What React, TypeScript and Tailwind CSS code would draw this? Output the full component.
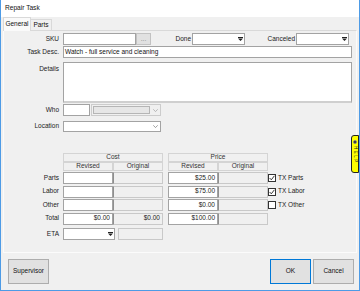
import React from "react";

function Tri() {
  return (
    <svg width="5" height="4" viewBox="0 0 5 4">
      <rect x="0" y="0" width="5" height="1" fill="#222" />
      <polygon points="0,1.5 5,1.5 2.5,4" fill="#222" />
    </svg>
  );
}

function Chev({ color = "#888" }: { color?: string }) {
  return (
    <svg width="5" height="3" viewBox="0 0 5 3">
      <polyline points="0.3,0.3 2.5,2.6 4.7,0.3" fill="none" stroke={color} strokeWidth="0.8" />
    </svg>
  );
}

function Check({ checked }: { checked: boolean }) {
  return (
    <div className="w-[8px] h-[8px] border border-[#333] bg-white flex items-center justify-center">
      {checked && (
        <svg width="6" height="6" viewBox="0 0 6 6">
          <polyline points="0.6,3 2.3,4.8 5.4,0.8" fill="none" stroke="#222" strokeWidth="0.9" />
        </svg>
      )}
    </div>
  );
}

function Label({ children, className = "" }: { children?: React.ReactNode; className?: string }) {
  return <div className={`w-[55px] shrink-0 text-right text-[#222] ${className}`}>{children}</div>;
}

function White({ w, children, className = "" }: { w: string; children?: React.ReactNode; className?: string }) {
  return (
    <div className={`${w} h-full bg-white border border-[#a3a3a3] flex items-center justify-end pr-[2px] shrink-0 ${className}`}>
      {children}
    </div>
  );
}

function Grey({ w, children, className = "" }: { w: string; children?: React.ReactNode; className?: string }) {
  return (
    <div className={`${w} h-full bg-[#f0f0f0] border border-[#c9c9c9] border-l-[#8f8f8f] flex items-center justify-end pr-[2px] shrink-0 ${className}`}>
      {children}
    </div>
  );
}

function Head({ w, children }: { w: string; children?: React.ReactNode }) {
  return (
    <div className={`${w} h-full bg-[#f0f0f0] border border-[#d4d4d4] flex items-center justify-center text-[#333] shrink-0`}>
      {children}
    </div>
  );
}

function Row({
  label,
  cr,
  co,
  pr,
  po,
  tx,
  checked,
  className = "",
}: {
  label: string;
  cr?: string;
  co?: string;
  pr?: string;
  po?: string;
  tx?: string;
  checked?: boolean;
  className?: string;
}) {
  return (
    <div className={`flex items-center h-[12px] ${className}`}>
      <Label>{label}</Label>
      <div className="w-[4px] shrink-0" />
      <White w="w-[50px]">{cr}</White>
      <Grey w="w-[50px]">{co}</Grey>
      <div className="w-[5px] shrink-0" />
      <White w="w-[50px]">{pr}</White>
      <Grey w="w-[50px]">{po}</Grey>
      {tx && (
        <div className="flex items-center ml-[0px] gap-[2px]">
          <Check checked={!!checked} />
          <span className="text-[#222]">{tx}</span>
        </div>
      )}
    </div>
  );
}

export default function App() {
  return (
    <div className="relative w-[360px] h-[291px] overflow-hidden bg-[#f0f0f0] border-x border-b border-[#4d9be6] font-['Liberation_Sans',Arial,sans-serif] text-[6.5px] leading-none text-[#1a1a1a]">
      {/* title bar */}
      <div className="h-[17px] bg-white flex items-center pl-[4px] text-[6.6px] text-[#111]">Repair Task</div>

      {/* tabs */}
      <div className="flex items-end h-[13px] pl-[2px]">
        <div className="relative z-10 -mb-px h-[14px] w-[28px] bg-[#fafafa] border border-b-0 border-[#d9d9d9] flex items-center justify-center text-[#111]">
          General
        </div>
        <div className="h-[11px] w-[21px] bg-[#f0f0f0] border border-b-0 border-l-0 border-[#d9d9d9] flex items-center justify-center text-[#111]">
          Parts
        </div>
      </div>

      {/* panel */}
      <div className="ml-[2px] w-[354px] h-[223px] border border-[#d9d9d9] border-b-[#fbfbfb] border-l-[#fbfbfb] border-r-[#fbfbfb] flex flex-col">
        {/* SKU row */}
        <div className="mt-[2px] flex items-center h-[12px]">
          <Label>SKU</Label>
          <div className="w-[4px] shrink-0" />
          <div className="w-[73px] h-full bg-white border border-[#a3a3a3] shrink-0" />
          <div className="w-[15px] h-full bg-[#e1e1e1] border border-[#c2c2c2] flex items-center justify-center text-[#888] shrink-0">
            ...
          </div>
          <div className="w-[41px] text-right pr-[1px] shrink-0">Done</div>
          <div className="w-[53px] h-full bg-white border border-[#a3a3a3] flex items-center justify-end pr-[1px] shrink-0">
            <Tri />
          </div>
          <div className="w-[51px] text-right pr-[1px] shrink-0">Canceled</div>
          <div className="w-[53px] h-full bg-white border border-[#a3a3a3] flex items-center justify-end pr-[1px] shrink-0">
            <Tri />
          </div>
        </div>

        {/* Task desc */}
        <div className="mt-[1px] flex items-center h-[12px]">
          <Label>Task Desc.</Label>
          <div className="w-[4px] shrink-0" />
          <div className="w-[289px] h-full bg-white border border-[#a3a3a3] flex items-center pl-[1px] text-[#111] shrink-0">
            Watch - full service and cleaning
          </div>
        </div>

        {/* Details */}
        <div className="mt-[4px] flex h-[41px]">
          <Label className="pt-[4px]">Details</Label>
          <div className="w-[4px] shrink-0" />
          <div className="w-[289px] h-full bg-white border border-[#a3a3a3] border-b-2 border-b-[#cfcfcf] shrink-0" />
        </div>

        {/* Who */}
        <div className="mt-[1px] flex items-center h-[12px]">
          <Label>Who</Label>
          <div className="w-[4px] shrink-0" />
          <div className="w-[27px] h-full bg-white border border-[#a3a3a3] shrink-0" />
          <div className="ml-[1px] w-[70px] h-full bg-[#f0f0f0] border border-[#cccccc] flex items-center pl-[1px] pr-[2px] shrink-0">
            <div className="w-[57px] h-[8px] bg-[#e6e6e6] border border-[#b5b5b5]" />
            <div className="flex-1 flex justify-end">
              <Chev color="#aaa" />
            </div>
          </div>
        </div>

        {/* Location */}
        <div className="mt-[5px] flex items-center h-[11px]">
          <Label>Location</Label>
          <div className="w-[4px] shrink-0" />
          <div className="w-[98px] h-full bg-white border border-[#a3a3a3] flex items-center justify-end pr-[2px] shrink-0">
            <Chev color="#8a8a8a" />
          </div>
        </div>

        {/* header rows */}
        <div className="mt-[21px] flex items-center h-[9px]">
          <Label />
          <div className="w-[4px] shrink-0" />
          <Head w="w-[100px]">Cost</Head>
          <div className="w-[5px] shrink-0" />
          <Head w="w-[100px]">Price</Head>
        </div>
        <div className="flex items-center h-[9px]">
          <Label />
          <div className="w-[4px] shrink-0" />
          <Head w="w-[50px]">Revised</Head>
          <Head w="w-[50px]">Original</Head>
          <div className="w-[5px] shrink-0" />
          <Head w="w-[50px]">Revised</Head>
          <Head w="w-[50px]">Original</Head>
        </div>

        <Row className="mt-[1px]" label="Parts" pr="$25.00" tx="TX Parts" checked />
        <Row className="mt-[1.5px]" label="Labor" pr="$75.00" tx="TX Labor" checked />
        <Row className="mt-[1.5px]" label="Other" pr="$0.00" tx="TX Other" checked={false} />
        <Row className="mt-[1.5px]" label="Total" cr="$0.00" co="$0.00" pr="$100.00" />

        {/* ETA */}
        <div className="mt-[3.5px] flex items-center h-[12px]">
          <Label>ETA</Label>
          <div className="w-[4px] shrink-0" />
          <div className="w-[52px] h-full bg-white border border-[#a3a3a3] flex items-center justify-end pr-[1px] shrink-0">
            <Tri />
          </div>
          <div className="ml-[3px] w-[45px] h-full bg-[#f0f0f0] border border-[#c9c9c9] shrink-0" />
        </div>
      </div>

      {/* buttons */}
      <div className="mt-[6px] flex h-[25px] pl-[7px]">
        <div className="w-[41px] h-full bg-[#e1e1e1] border border-[#adadad] flex items-center justify-center text-[#111]">
          Supervisor
        </div>
        <div className="ml-[221px] w-[41px] h-full bg-[#e1e1e1] border border-[#0078d7] flex items-center justify-center text-[#111]">
          OK
        </div>
        <div className="ml-[2px] w-[41px] h-full bg-[#e1e1e1] border border-[#adadad] flex items-center justify-center text-[#111]">
          Cancel
        </div>
      </div>

      {/* help tab */}
      <div className="absolute left-[350px] top-[135px] w-[8px] h-[38px] bg-[#ffff00] border border-[#222] rounded-l-[3px] flex flex-col items-center pt-[4px]">
        <div className="w-[4px] h-[4px] rounded-full bg-[#222] border border-[#888]" />
        <div className="mt-[2px] [writing-mode:vertical-rl] text-[4.5px] leading-none tracking-[1.5px] text-[#222]">HELP</div>
      </div>
    </div>
  );
}
